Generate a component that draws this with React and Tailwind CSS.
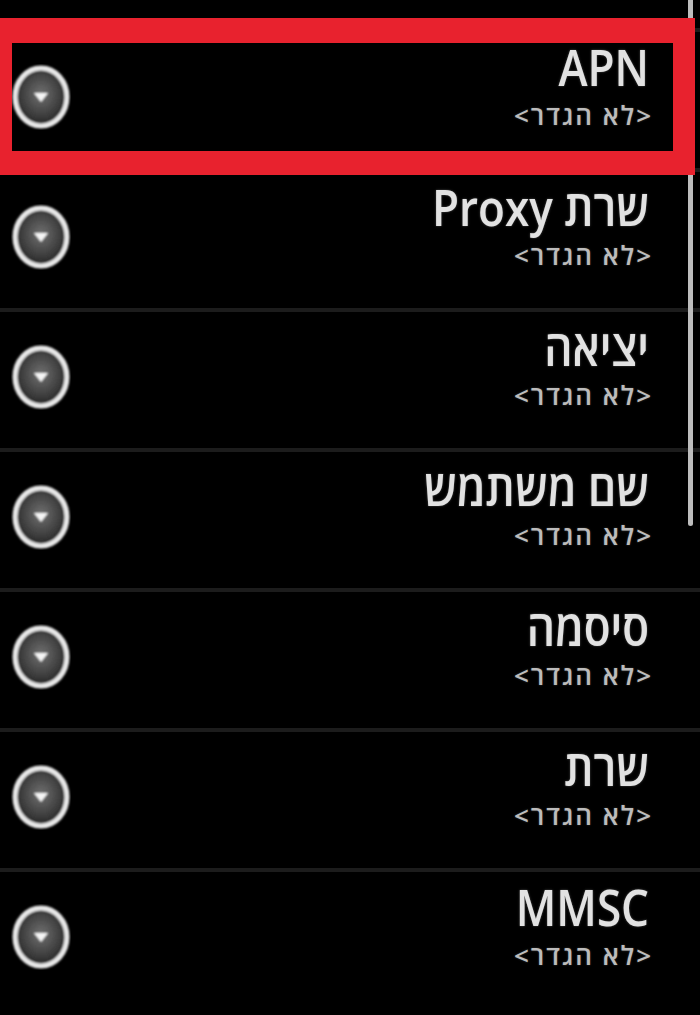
import React from "react";

const items = [
  "APN",
  "שרת Proxy",
  "יציאה",
  "שם משתמש",
  "סיסמה",
  "שרת",
  "MMSC",
];

function Knob() {
  return (
    <svg width="60" height="66" viewBox="0 0 60 66" className="block">
      <defs>
        <radialGradient id="kg" cx="50%" cy="45%" r="55%">
          <stop offset="0%" stopColor="#707070" />
          <stop offset="70%" stopColor="#3c3c3c" />
          <stop offset="100%" stopColor="#222" />
        </radialGradient>
        <filter id="kb" x="-20%" y="-20%" width="140%" height="140%">
          <feGaussianBlur stdDeviation="0.9" />
        </filter>
      </defs>
      <g filter="url(#kb)">
        <ellipse cx="30" cy="33" rx="26" ry="29" fill="url(#kg)" stroke="#e8e8e8" strokeWidth="5" />
        <path d="M23 29 L37 29 L30 38 Z" fill="#f6f6f6" />
      </g>
    </svg>
  );
}

function Row({ title }) {
  return (
    <div className="relative h-[140px] border-t-4 border-[#1c1c1c] flex items-start justify-between">
      <div className="ml-[11px] mt-[32px]">
        <Knob />
      </div>
      <div dir="rtl" className="mr-[51px] flex flex-col items-start pt-[10px]">
        <div className="leading-[48px] h-[48px] text-[44px] font-semibold text-[#e2e2e2] scale-y-[1.15] origin-right [text-shadow:0_0_2px_rgba(255,255,255,0.35)]">
          {title}
        </div>
        <div className="mt-[10px] mr-[-4px] leading-[30px] text-[26px] font-semibold text-[#bcbcbc] tracking-[2px] [text-shadow:0_0_2px_rgba(255,255,255,0.25)]">
          {"<לא הגדר>"}
        </div>
      </div>
    </div>
  );
}

export default function App() {
  return (
    <div
      className="relative w-[700px] h-[1015px] overflow-hidden bg-black"
      style={{ fontFamily: '"Open Sans", "DejaVu Sans", sans-serif' }}
    >
      <div className="pt-[28px]">
        {items.map((t) => (
          <Row key={t} title={t} />
        ))}
      </div>
      <div className="absolute left-[688px] top-0 w-[5px] h-[526px] rounded-b-sm bg-[#bdbdbd]" />
      <div className="absolute left-0 top-[18px] w-[695px] h-[157px] border-t-[25px] border-b-[24px] border-l-[12px] border-r-[22px] border-[#e8222e] blur-[0.6px]" />
    </div>
  );
}
